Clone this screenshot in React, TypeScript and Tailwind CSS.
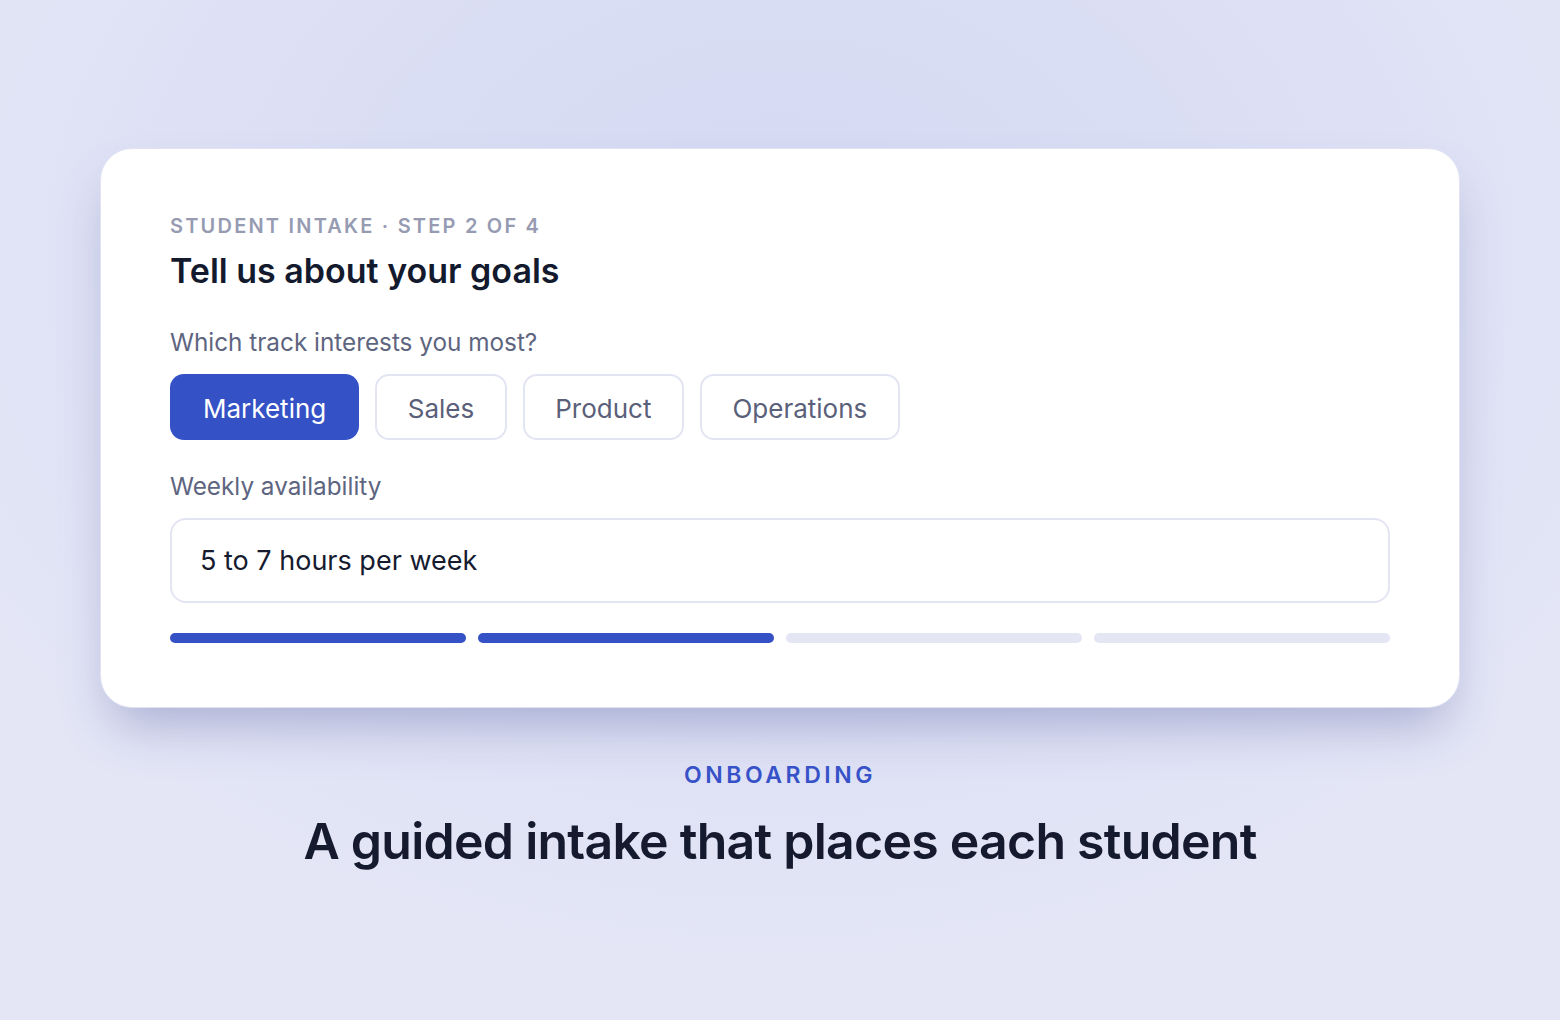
export default function App() {
  const tracks = ["Marketing", "Sales", "Product", "Operations"];
  const steps = [true, true, false, false];
  return (
    <div
      className="min-h-[1020px] w-full pt-[148px] bg-[radial-gradient(ellipse_60%_70%_at_50%_25%,#d4d8f2_0%,#dadef4_45%,#e4e6f6_100%)]"
      style={{ fontFamily: "Inter, 'Noto Sans', sans-serif" }}
    >
      <div className="mx-auto w-[1360px] rounded-[32px] border border-[#e1e3f2] bg-white px-[69px] pt-[65px] pb-[64px] shadow-[0_28px_50px_-12px_rgba(70,80,150,0.36)]">
        <div className="text-[20px] leading-[24px] font-semibold tracking-[0.11em] text-[#969bb2]">
          STUDENT INTAKE · STEP 2 OF 4
        </div>
        <h1 className="mt-[13px] text-[34px] leading-[40px] font-semibold text-[#141a2e]">
          Tell us about your goals
        </h1>
        <div className="mt-[37px] text-[24.3px] leading-[28px] text-[#5e6580]">
          Which track interests you most?
        </div>
        <div className="mt-[18px] flex gap-4">
          {tracks.map((t, i) =>
            i === 0 ? (
              <button
                key={t}
                className="h-[66px] rounded-[14px] bg-[#3451c6] px-[33px] pt-[2px] text-[26px] text-white"
              >
                {t}
              </button>
            ) : (
              <button
                key={t}
                className="h-[66px] rounded-[14px] border-2 border-[#e3e5f3] bg-white px-[30.5px] pt-[2px] text-[26px] text-[#5a6079]"
              >
                {t}
              </button>
            )
          )}
        </div>
        <div className="mt-[32px] text-[24.3px] leading-[28px] text-[#5e6580]">
          Weekly availability
        </div>
        <div className="mt-[18px] flex h-[85px] items-center rounded-[16px] border-2 border-[#e3e5f3] px-[28px] pt-[2px] text-[27px] text-[#161b30]">
          5 to 7 hours per week
        </div>
        <div className="mt-[30px] grid grid-cols-4 gap-3">
          {steps.map((done, i) => (
            <div
              key={i}
              className={done ? "h-[10px] rounded-full bg-[#3451c6]" : "h-[10px] rounded-full bg-[#e4e6f4]"}
            />
          ))}
        </div>
      </div>
      <div className="mt-[53px] text-center text-[23px] leading-[28px] font-semibold tracking-[0.155em] text-[#3752c8]">
        ONBOARDING
      </div>
      <div className="mt-[22px] text-center text-[50px] leading-[60px] font-semibold tracking-[-0.015em] text-[#151a2e]">
        A guided intake that places each student
      </div>
    </div>
  );
}
